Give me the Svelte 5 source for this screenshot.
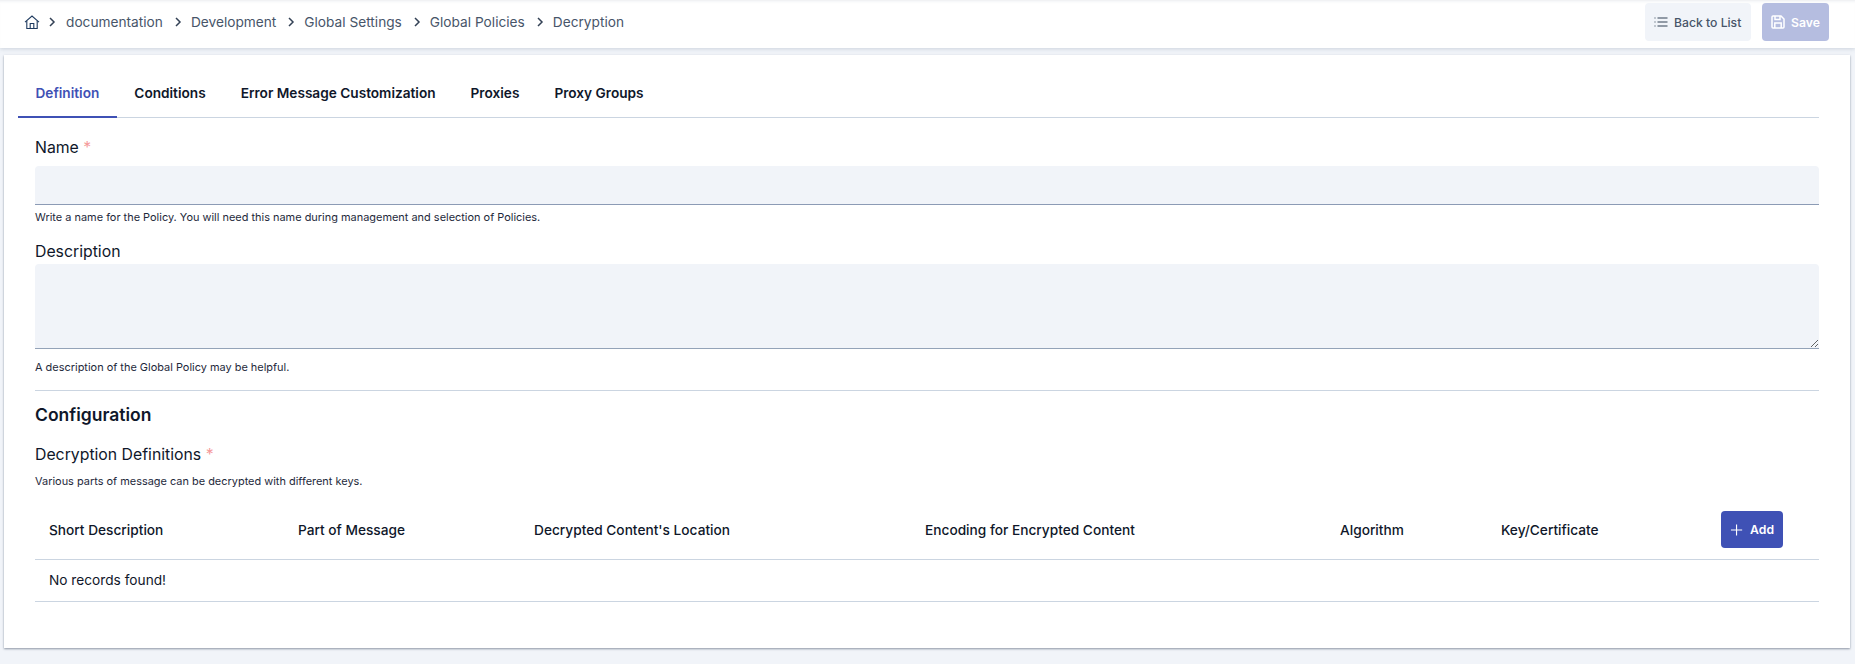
<script lang="ts">
	const crumbs = ['documentation', 'Development', 'Global Settings', 'Global Policies', 'Decryption']
	const tabs = ['Definition', 'Conditions', 'Error Message Customization', 'Proxies', 'Proxy Groups']
	const columns = [
		{ label: 'Short Description', width: 249 },
		{ label: 'Part of Message', width: 236 },
		{ label: "Decrypted Content's Location", width: 391 },
		{ label: 'Encoding for Encrypted Content', width: 415 },
		{ label: 'Algorithm', width: 161 },
		{ label: 'Key/Certificate', width: 234 },
	]
</script>

<div class="page">
	<header class="topbar">
		<nav class="crumbs">
			<svg class="home" viewBox="0 0 16 16" width="16" height="16" fill="none" stroke="#1e3a5f" stroke-width="1.100">
				<path d="M1 8.200 8 2l7 6.200" />
				<path d="M2.800 7v7.500h10.400V7" />
				<path d="M6.200 14.500V9.500h3.600v5" />
			</svg>
			{#each crumbs as crumb}
				<svg class="chevron" viewBox="0 0 8 10" width="8" height="10" fill="none" stroke="#334155" stroke-width="1.500">
					<path d="m2 1 4 4-4 4" />
				</svg>
				<span>{crumb}</span>
			{/each}
		</nav>
		<div class="actions">
			<button class="btn back">
				<svg viewBox="0 0 14 12" width="14" height="12" fill="none" stroke="#334155" stroke-width="1.200">
					<path d="M0.500 2h1M3.500 2H13.500M0.500 6h1M3.500 6H13.500M0.500 10h1M3.500 10H13.500" />
				</svg>
				Back to List
			</button>
			<button class="btn save">
				<svg viewBox="0 0 14 14" width="14" height="14" fill="none" stroke="#fff" stroke-width="1.500">
					<path d="M1 2a1 1 0 0 1 1-1h8l3 3v8a1 1 0 0 1-1 1H2a1 1 0 0 1-1-1z" />
					<path d="M4 1v3.500h5V1M3.800 13V8h6.400v5" />
				</svg>
				Save
			</button>
		</div>
	</header>

	<main class="card">
		<div class="tabs">
			{#each tabs as tab, i}
				<div class="tab" class:active={i === 0}>{tab}</div>
			{/each}
		</div>

		<div class="field name-field">
			<label for="policy-name">Name <span class="req">*</span></label>
			<input id="policy-name" type="text" />
			<small>Write a name for the Policy. You will need this name during management and selection of Policies.</small>
		</div>

		<div class="field desc-field">
			<label for="policy-desc">Description</label>
			<textarea id="policy-desc"></textarea>
			<small>A description of the Global Policy may be helpful.</small>
		</div>

		<hr />

		<h2>Configuration</h2>

		<div class="defs">
			<div class="defs-label">Decryption Definitions <span class="req">*</span></div>
			<small>Various parts of message can be decrypted with different keys.</small>
		</div>

		<table>
			<colgroup>
				{#each columns as col}
					<col style="width: {col.width}px" />
				{/each}
				<col />
			</colgroup>
			<thead>
				<tr>
					{#each columns as col}
						<th>{col.label}</th>
					{/each}
					<th class="add-cell">
						<button class="btn add">
							<svg viewBox="0 0 14 14" width="14" height="14" fill="none" stroke="#fff" stroke-width="1.200">
								<path d="M7 1v12M1 7h12" />
							</svg>
							Add
						</button>
					</th>
				</tr>
			</thead>
			<tbody>
				<tr>
					<td colspan="7">No records found!</td>
				</tr>
			</tbody>
		</table>
	</main>
</div>

<style>
	:global(body) {
		margin: 0;
		background: #f1f4f9;
	}

	.page {
		height: 664px;
		overflow: hidden;
		background: #f1f4f9;
		font-family: Inter, "Liberation Sans", sans-serif;
		color: #0f172a;
	}

	.topbar {
		height: 48px;
		box-sizing: border-box;
		padding: 3px 26px 0 24px;
		display: flex;
		align-items: flex-start;
		justify-content: space-between;
		background: #fff;
		box-shadow: 0 1px 4px rgba(100, 116, 139, 0.25), inset 0 3px 3px -2px rgba(100, 116, 139, 0.14);
	}

	.crumbs {
		height: 38px;
		display: flex;
		align-items: center;
		font-size: 13.7px;
		color: #475569;
	}

	.home {
		margin-right: 8px;
	}

	.chevron {
		margin-right: 9px;
	}

	.crumbs span {
		margin-right: 11px;
	}

	/* the first crumb sits one pixel further out */
	.home + .chevron {
		margin-right: 10px;
	}

	.actions {
		display: flex;
		gap: 11px;
	}

	.btn {
		height: 38px;
		box-sizing: border-box;
		border: 0;
		border-radius: 4px;
		display: flex;
		align-items: center;
		gap: 6px;
		font-family: inherit;
		font-size: 12.2px;
		font-weight: 500;
	}

	.back {
		width: 106px;
		padding: 0 9px;
		background: #f1f4f9;
		color: #475569;
	}

	.save {
		width: 67px;
		padding: 0 9px;
		background: #b5bde0;
		color: #fff;
		font-weight: 600;
	}

	.card {
		margin: 7px 5px 0 4px;
		height: 593px;
		box-sizing: border-box;
		padding: 18px 31px 0;
		background: #fff;
		box-shadow: 0 1px 2px rgba(71, 85, 105, 0.6);
	}

	.tabs {
		margin: 0 0 0 -17px;
		height: 45px;
		box-sizing: border-box;
		display: flex;
		border-bottom: 1px solid #cbd5e1;
	}

	.tab {
		height: 45px;
		box-sizing: border-box;
		padding: 0 17.5px 3px;
		display: flex;
		align-items: center;
		border-bottom: 2px solid transparent;
		font-size: 13.65px;
		font-weight: 600;
		color: #0f172a;
	}

	.tab.active {
		color: #3f51b5;
		border-bottom-color: #3f51b5;
	}

	.field {
		display: flex;
		flex-direction: column;
	}

	.name-field {
		margin-top: 18px;
	}

	.desc-field {
		margin-top: 16px;
	}

	label,
	.defs-label {
		padding-top: 1px;
		font-size: 15.8px;
		line-height: 21px;
		color: #0f172a;
	}

	.req {
		color: #f59a9a;
	}

	input,
	textarea {
		display: block;
		box-sizing: border-box;
		width: 100%;
		margin: 0;
		padding: 8px 12px;
		border: 0;
		border-bottom: 1px solid #94a3b8;
		border-radius: 4px 4px 0 0;
		background: #f1f4f9;
		outline: none;
	}

	input {
		margin-top: 8px;
		height: 39px;
		border-bottom-color: #8c9bb5;
	}

	textarea {
		margin-top: 2px;
		height: 85px;
	}

	small {
		display: block;
		font-size: 10.95px;
		line-height: 14px;
		color: #1e293b;
	}

	.name-field small {
		margin-top: 5px;
	}

	.desc-field small {
		margin-top: 11px;
	}

	hr {
		margin: 16px 0 0;
		border: 0;
		border-top: 1px solid #cbd5e1;
	}

	h2 {
		margin: 13px 0 0;
		font-size: 17.5px;
		line-height: 22px;
		font-weight: 600;
	}

	.defs {
		margin-top: 17px;
	}

	.defs small {
		margin-top: 9px;
	}

	table {
		width: 100%;
		margin-top: 23px;
		border-collapse: collapse;
		table-layout: fixed;
	}

	th,
	td {
		padding: 0 0 0 14px;
		text-align: left;
		font-size: 13.7px;
		font-weight: 450;
		color: #0f172a;
	}

	th {
		height: 48px;
		padding-bottom: 11px;
		box-sizing: border-box;
		border-bottom: 1px solid #cbd5e1;
	}

	td {
		height: 42px;
		padding-bottom: 1px;
		box-sizing: border-box;
		font-weight: 400;
		border-bottom: 1px solid #cbd5e1;
	}

	th.add-cell {
		padding-left: 0;
	}

	.add {
		width: 62px;
		height: 37px;
		padding: 0 9px;
		gap: 7px;
		background: #3f51b5;
		color: #fff;
		font-weight: 600;
	}
</style>
